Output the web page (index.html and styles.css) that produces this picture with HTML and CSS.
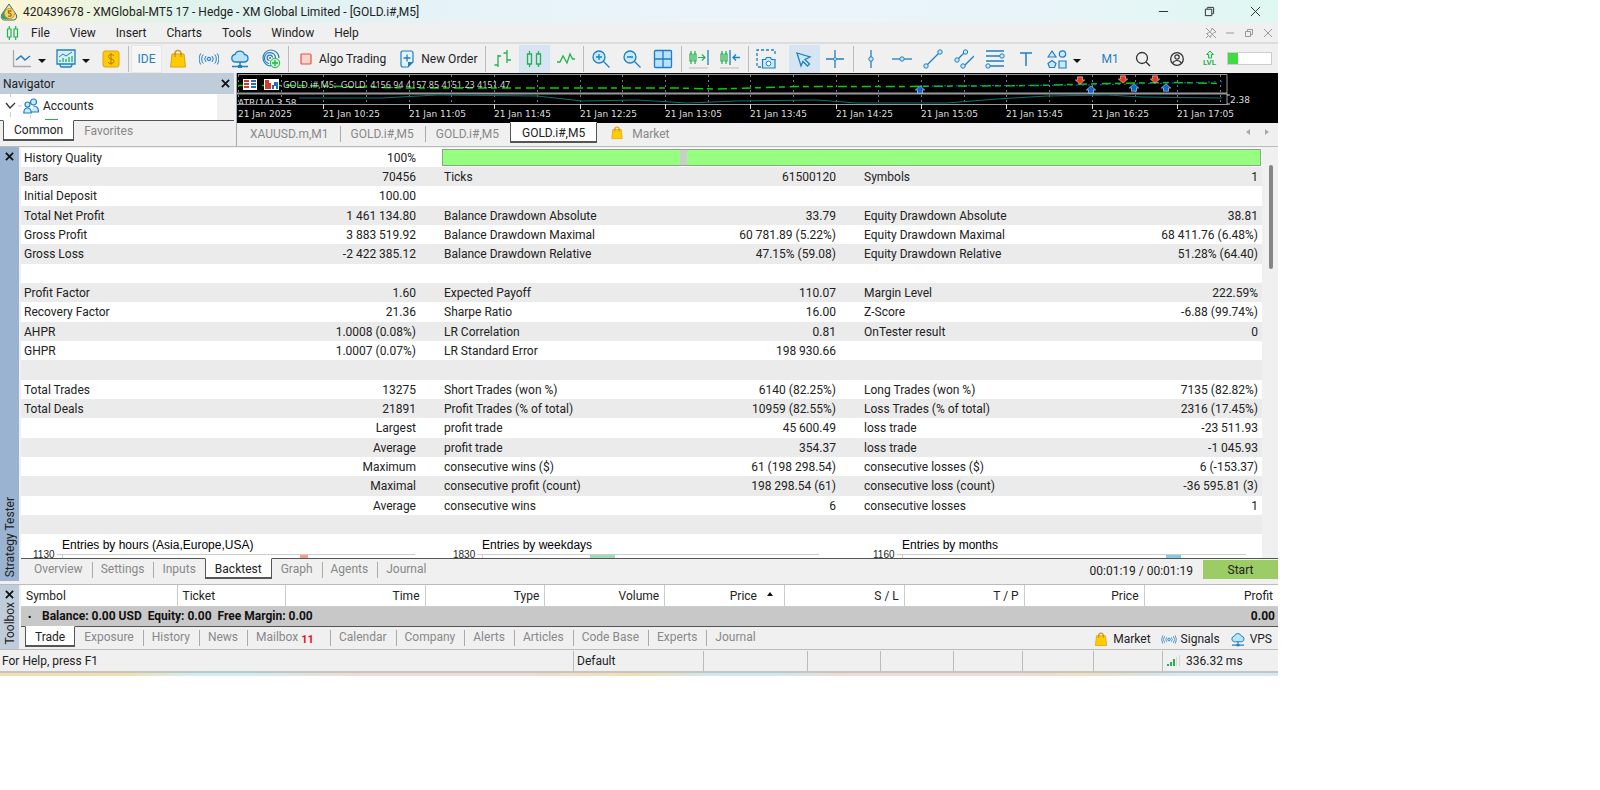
FILE: index.html
```html
<!DOCTYPE html>
<html lang="en">
  <head>
    <meta charset="UTF-8" />
    <meta name="viewport" content="width=device-width, initial-scale=1.0" />
    <title>420439678 - XMGlobal-MT5 17</title>
    <link rel="stylesheet" href="styles.css">
  </head>
  <body>
    <!-- shared icons -->
    <svg class="symbols" aria-hidden="true">
      <symbol id="bag" viewBox="0 0 20 20">
        <path d="M7 6V4.500a3 3 0 0 1 6 0V6" fill="none" stroke="#d69a10" stroke-width="1.500" />
        <path d="M4 5h12l1.500 13h-15z" fill="#fc0" stroke="#dba112" />
        <path d="M7 4v4M13 4v4" stroke="#b57f10" />
      </symbol>
      <symbol id="signal" viewBox="0 0 20 20">
        <circle cx="10" cy="10" r="1.800" fill="#9edcff" stroke="#1f7fc0" />
        <path d="M7 7a4.500 4.500 0 0 0 0 6M13 7a4.500 4.500 0 0 1 0 6M4.300 5.500a7 7 0 0 0 0 9M15.700 5.500a7 7 0 0 1 0 9M1.700 4.500a11 11 0 0 0 0 11M18.300 4.500a11 11 0 0 1 0 11" fill="none" stroke="#1f7fc0" />
      </symbol>
      <symbol id="cloud" viewBox="0 0 20 20">
        <path d="M5 13a3.800 3.800 0 0 1 0-7.500 5 5 0 0 1 9.500 0 3.800 3.800 0 0 1 .5 7.500z" fill="#b9e3fd" stroke="#1f7fc0" stroke-width="1.300" />
        <path d="M10 13V17M2 17.500h16" stroke="#1f7fc0" stroke-width="1.500" />
        <path d="M8 16h4v3H8z" fill="#1f7fc0" />
      </symbol>
      <symbol id="up" viewBox="0 0 10 8">
        <path d="M5 .3l4.700 4.200H7.500v3.200h-5V4.500H.3z" fill="#1266c4" stroke="#cfe4fa" stroke-width=".6" />
      </symbol>
      <symbol id="down" viewBox="0 0 10 8">
        <path d="M5 7.700L.3 3.500h2.200V.3h5v3.200h2.200z" fill="#e8391d" stroke="#f7cfc6" stroke-width=".6" />
      </symbol>
    </svg>

    <div class="window">
      <header class="titlebar">
        <svg class="logo" viewBox="0 0 18 18">
          <path d="M9 1l7.500 11c.8 3-1 5-3 5h-9c-3 0-4-3-2.500-6z" fill="#f3e3a1" stroke="#2e6f8e" />
          <path d="M2 11l5-8c-3 5-2 10 3 13H4c-2 0-3-2-2-5z" fill="#3fa06a" />
          <circle cx="9.500" cy="10.500" r="5" fill="#f7d56a" stroke="#c3922b" />
          <path d="M11.500 8h-3v2.200c3-.5 3.500 2.800 1.500 3H8" fill="none" stroke="#a06b10" stroke-width="1.300" />
        </svg>
        <span class="title">420439678 - XMGlobal-MT5 17 - Hedge - XM Global Limited - [GOLD.i#,M5]</span>
        <button class="winbtn" aria-label="Minimize"><svg viewBox="0 0 12 12"><path d="M1 6h10" /></svg></button>
        <button class="winbtn" aria-label="Restore"><svg viewBox="0 0 12 12"><path d="M1.500 3.500h7v7h-7zM3.500 3V2q0-.5.500-.5h6q.5 0 .5.500v6q0 .5-.5.500H9" /></svg></button>
        <button class="winbtn" aria-label="Close"><svg viewBox="0 0 12 12"><path d="M1 1l10 10M11 1L1 11" /></svg></button>
      </header>

      <nav class="menubar">
        <svg class="menuicon" viewBox="0 0 12 14"><path d="M1 3h3.500v8H1zM7.500 3H11v8H7.500zM2.800 0v3M2.800 11v3M9.200 0v3M9.200 11v3" fill="none" stroke="#22b14c" stroke-width="1.200" /></svg>
        <button>File</button>
        <button>View</button>
        <button>Insert</button>
        <button>Charts</button>
        <button>Tools</button>
        <button>Window</button>
        <button>Help</button>
        <div class="childbtns">
          <button aria-label="Unpin"><svg viewBox="0 0 12 12"><path d="M7 1l4 4-2 .5-3 3-.5 2-4-4 2-.5 3-3zM4 8l-3 3M1 1l10 10" /></svg></button>
          <button aria-label="Minimize chart"><svg viewBox="0 0 12 12"><path d="M2 6h8" /></svg></button>
          <button aria-label="Restore chart"><svg viewBox="0 0 12 12"><path d="M2.500 4.500h5v5h-5zM4.500 4V2.500h5v5H8" /></svg></button>
          <button aria-label="Close chart"><svg viewBox="0 0 12 12"><path d="M2 2l8 8M10 2l-8 8" /></svg></button>
        </div>
      </nav>

      <div class="toolbar">
        <span class="grip"></span>
        <button class="drop" aria-label="Line chart">
          <svg viewBox="0 0 20 20"><path d="M1.500 1v16.500H19" fill="none" stroke="#aaa" stroke-width="1.300" /><path d="M4 11l5-4 4 4 5-4" fill="none" stroke="#1f7fc0" stroke-width="1.500" /></svg>
          <span class="arrow"></span>
        </button>
        <button class="drop" aria-label="Templates">
          <svg viewBox="0 0 20 20"><path d="M1 1h18v14H1zM4 15q0 3 2 3h8q2 0 2-3" fill="#d8effd" stroke="#1f7fc0" stroke-width="1.300" /><path d="M3 8l4-3 3 2 6-4" fill="none" stroke="#1f7fc0" /><path d="M4 13v-2M7 13V9M10 13v-3M13 13V8M16 13V7" stroke="#22b14c" stroke-width="1.300" /></svg>
          <span class="arrow"></span>
        </button>
        <button class="tool" aria-label="Quotes">
          <svg viewBox="0 0 20 20"><rect x="2" y="2" width="16" height="16" rx="2" fill="#fc0" stroke="#dfa01c" /><path d="M13 7q-1-1.500-3-1.500-2.500 0-2.500 2T10 10q3 .3 3 2.300T10 14.500q-2.200 0-3-1.500M10 4v12" fill="none" stroke="#b5780c" /></svg>
        </button>
        <span class="sep"></span>
        <button class="tool ide">IDE</button>
        <button class="tool" aria-label="Market"><svg><use href="#bag" /></svg></button>
        <button class="tool" aria-label="Signals"><svg><use href="#signal" /></svg></button>
        <button class="tool" aria-label="VPS"><svg><use href="#cloud" /></svg></button>
        <button class="tool" aria-label="Copy trading">
          <svg viewBox="0 0 20 20"><path d="M10 17a8 8 0 1 1 8-8M8 14.500A5.500 5.500 0 1 1 14.500 9M8.500 11.500a2.700 2.700 0 1 1 3-3" fill="none" stroke="#1f7fc0" stroke-width="1.200" /><circle cx="9" cy="9" r="1" fill="#1f7fc0" /><circle cx="14" cy="14" r="4.700" fill="#c9f5cf" stroke="#22b14c" /><path d="M14 11v6M11 14h6" stroke="#22b14c" stroke-width="1.300" /></svg>
        </button>
        <span class="sep"></span>
        <button class="wide"><svg class="small" viewBox="0 0 12 12"><rect x="1" y="1" width="10" height="10" rx="1" fill="#ffd3cd" stroke="#e4523f" stroke-width="1.200" /></svg>Algo Trading</button>
        <button class="wide"><svg class="note" viewBox="0 0 14 18"><path d="M2 1h9q2 0 2 2v9l-5 5H3q-2 0-2-2V3q0-2 2-2z" fill="#e4f4fe" stroke="#1f7fc0" stroke-width="1.200" /><path d="M8 17v-5h5z" fill="#1f7fc0" /><path d="M7 4.500v7M3.500 8h7" stroke="#1f7fc0" stroke-width="1.300" /></svg>New Order</button>
        <span class="sep"></span>
        <button class="tool" aria-label="Bars">
          <svg viewBox="0 0 20 20"><path d="M5 6v12M1.500 16H5M5 7h3M14 1v13M10.500 4H14M14 11h4" fill="none" stroke="#22b14c" stroke-width="1.300" /></svg>
        </button>
        <button class="tool on" aria-label="Candles">
          <svg viewBox="0 0 20 20"><path d="M3.500 5h4v10h-4zM12.500 5h4v10h-4zM5.500 2v3M5.500 15v3M14.500 2v3M14.500 15v3" fill="none" stroke="#22b14c" stroke-width="1.300" /></svg>
        </button>
        <button class="tool" aria-label="Line">
          <svg viewBox="0 0 20 20"><path d="M2 13h3l3-6 4 7 3-9 2.500 5H20" fill="none" stroke="#22b14c" stroke-width="1.300" /></svg>
        </button>
        <span class="sep"></span>
        <button class="tool" aria-label="Zoom in">
          <svg viewBox="0 0 20 20"><circle cx="8" cy="8" r="6" fill="#c9e9fd" stroke="#1f7fc0" stroke-width="1.300" /><path d="M12.500 12.500l6 6M5 8h6M8 5v6" stroke="#1f7fc0" stroke-width="1.300" /></svg>
        </button>
        <button class="tool" aria-label="Zoom out">
          <svg viewBox="0 0 20 20"><circle cx="8" cy="8" r="6" fill="#c9e9fd" stroke="#1f7fc0" stroke-width="1.300" /><path d="M12.500 12.500l6 6M5 8h6" stroke="#1f7fc0" stroke-width="1.300" /></svg>
        </button>
        <button class="tool" aria-label="Tile windows">
          <svg viewBox="0 0 20 20"><rect x="1.500" y="1.500" width="17" height="17" rx="1" fill="#b9e3fd" stroke="#1f7fc0" stroke-width="1.300" /><path d="M10 2v16M2 10h16" stroke="#1f7fc0" stroke-width="1.300" /></svg>
        </button>
        <span class="sep"></span>
        <button class="tool" aria-label="Auto scroll">
          <svg viewBox="0 0 20 20"><path d="M1 5h2v7H1zM5 5h2v7H5zM2 2v3M2 12v3M6 2v3M6 12v3M9 8.500h7M13 5.500l3 3-3 3" fill="none" stroke="#22b14c" stroke-width="1.200" /><path d="M19 1v15" stroke="#1f7fc0" stroke-width="1.300" /><path d="M0 19h19" stroke="#bbb" /></svg>
        </button>
        <button class="tool" aria-label="Chart shift">
          <svg viewBox="0 0 20 20"><path d="M1 5h2v7H1zM5 5h2v7H5zM2 2v3M2 12v3M6 2v3M6 12v3" fill="none" stroke="#22b14c" stroke-width="1.200" /><path d="M10 1v15M20 8.500h-7M16 5.500l-3 3 3 3" fill="none" stroke="#1f7fc0" stroke-width="1.300" /><path d="M0 19h19" stroke="#bbb" /></svg>
        </button>
        <span class="sep"></span>
        <button class="tool" aria-label="Screenshot">
          <svg viewBox="0 0 20 20"><path d="M5 18H1V1h18v6" fill="none" stroke="#1f7fc0" stroke-width="1.300" stroke-dasharray="3 2" /><path d="M6.500 10.500h3l1-2h4l1 2h3.500v8.500H6.500z" fill="#c9e9fd" stroke="#1f7fc0" stroke-width="1.200" /><circle cx="12.500" cy="14.500" r="2.300" fill="#fff" stroke="#1f7fc0" /></svg>
        </button>
        <span class="grip"></span>
        <button class="tool on" aria-label="Cursor">
          <svg viewBox="0 0 20 20"><path d="M3 4l13 4-5 2.500 4.500 4.500-2 2-4.500-4.500L7 17z" fill="#c9e9fd" stroke="#1f7fc0" stroke-width="1.300" /></svg>
        </button>
        <button class="tool" aria-label="Crosshair">
          <svg viewBox="0 0 20 20"><path d="M10 1v7M10 12v7M1 10h7M12 10h7" stroke="#1f7fc0" stroke-width="1.300" /><circle cx="10" cy="10" r="1.500" fill="none" stroke="#1f7fc0" /></svg>
        </button>
        <span class="sep"></span>
        <button class="tool" aria-label="Vertical line">
          <svg viewBox="0 0 20 20"><path d="M10 1v18" stroke="#1f7fc0" stroke-width="1.300" /><circle cx="10" cy="10" r="2.200" fill="#c9e9fd" stroke="#1f7fc0" /></svg>
        </button>
        <button class="tool" aria-label="Horizontal line">
          <svg viewBox="0 0 20 20"><path d="M0 10h20" stroke="#1f7fc0" stroke-width="1.300" /><circle cx="10" cy="10" r="2.200" fill="#c9e9fd" stroke="#1f7fc0" /></svg>
        </button>
        <button class="tool" aria-label="Trend line">
          <svg viewBox="0 0 20 20"><path d="M3 17L17 3" stroke="#1f7fc0" stroke-width="1.300" /><circle cx="3" cy="17" r="2.200" fill="#c9e9fd" stroke="#1f7fc0" /><circle cx="17" cy="3" r="2.200" fill="#c9e9fd" stroke="#1f7fc0" /></svg>
        </button>
        <button class="tool" aria-label="Channel">
          <svg viewBox="0 0 20 20"><path d="M2 12L12 2M9 18L20 7" stroke="#1f7fc0" stroke-width="1.300" /><circle cx="3" cy="11" r="2.200" fill="#c9e9fd" stroke="#1f7fc0" /><circle cx="11.500" cy="3" r="2.200" fill="#c9e9fd" stroke="#1f7fc0" /><circle cx="9" cy="17" r="2.200" fill="#c9e9fd" stroke="#1f7fc0" /></svg>
        </button>
        <button class="tool" aria-label="Fibonacci">
          <svg viewBox="0 0 20 20"><path d="M1 2h18M1 7h18M1 12h18M1 17h18" stroke="#1f7fc0" stroke-width="1.300" /><circle cx="17" cy="7" r="2.200" fill="#c9e9fd" stroke="#1f7fc0" /><circle cx="3" cy="17" r="2.200" fill="#c9e9fd" stroke="#1f7fc0" /></svg>
        </button>
        <button class="tool" aria-label="Text">
          <svg viewBox="0 0 20 20"><path d="M4 4h12M10 4v13" stroke="#1f7fc0" stroke-width="1.500" /></svg>
        </button>
        <button class="drop" aria-label="Shapes">
          <svg viewBox="0 0 20 20"><path d="M5 2l4 6H1zM12 12h7v7h-7z" fill="#c9e9fd" stroke="#1f7fc0" stroke-width="1.200" /><circle cx="15.500" cy="5" r="3.200" fill="#c9e9fd" stroke="#1f7fc0" stroke-width="1.200" /><path d="M5 11.500l4 3-1.500 4h-5l-1.500-4z" fill="#c9e9fd" stroke="#1f7fc0" stroke-width="1.200" /></svg>
          <span class="arrow"></span>
        </button>
        <span class="grip"></span>
        <button class="tool ide-text">M1</button>
        <button class="tool" aria-label="Search">
          <svg viewBox="0 0 20 20"><circle cx="9" cy="9" r="5.500" fill="none" stroke="#333" stroke-width="1.300" /><path d="M13 13l4 4" stroke="#333" stroke-width="1.500" /></svg>
        </button>
        <div class="account">
          <button class="tool" aria-label="Account">
            <svg viewBox="0 0 20 20"><circle cx="10" cy="10" r="6.300" fill="none" stroke="#333" stroke-width="1.300" /><circle cx="10" cy="8" r="2.200" fill="none" stroke="#333" stroke-width="1.200" /><path d="M6 14q1-2.500 4-2.500t4 2.500" fill="none" stroke="#333" stroke-width="1.200" /></svg>
          </button>
          <button class="tool lvl"><svg viewBox="0 0 10 9"><path d="M5 1l3.500 3.500h-2V8h-3V4.500h-2z" fill="#c9f5cf" stroke="#22b14c" /></svg>LVL</button>
          <div class="level"><div class="level-fill"></div></div>
        </div>
      </div>

      <div class="workspace">
        <aside class="navigator">
          <div class="nav-head">Navigator
            <button class="close" aria-label="Close navigator"><svg viewBox="0 0 10 10"><path d="M1 1l8 8M9 1L1 9" /></svg></button>
          </div>
          <div class="tree">
            <svg class="twig" viewBox="0 0 23 24"><path d="M10.500 0v3M10.500 18v5M30.500 21v3M18 12h4" stroke="#ccc" /><path d="M6 9l4 5 5-5" fill="none" stroke="#333" stroke-width="1.300" /></svg>
            <svg class="people" viewBox="0 0 16 16"><circle cx="10.500" cy="4" r="3" fill="#c9e9fd" stroke="#1f7fc0" stroke-width="1.200" /><path d="M8 14h7.500q0-6-5-6" fill="#c9e9fd" stroke="#1f7fc0" stroke-width="1.200" /><circle cx="4.500" cy="6.500" r="2.500" fill="#c9e9fd" stroke="#1f7fc0" stroke-width="1.200" /><path d="M.8 15q0-5 3.700-5t3.700 5z" fill="#c9e9fd" stroke="#1f7fc0" stroke-width="1.200" /></svg>
            <span>Accounts</span>
          </div>
          <div class="tabs">
            <button class="tab active">Common</button>
            <button class="tab">Favorites</button>
          </div>
        </aside>

        <section class="charts">
          <svg class="chart">
            <path d="M1 1.500H990V32M0 31.500H990" fill="none" stroke="#999" />
            <path d="M1.500 2V31M44.500 2V31M86.500 2V31M129.500 2V31M172.500 2V31M214.500 2V31M257.500 2V31M300.500 2V31M343.500 2V31M385.500 2V31M428.500 2V31M471.500 2V31M513.500 2V31M556.500 2V31M599.500 2V31M641.500 2V31M684.500 2V31M727.500 2V31M769.500 2V31M812.500 2V31M855.500 2V31M898.500 2V31M940.500 2V31M983.500 2V31" stroke="#777d88" stroke-dasharray="2 3" />
            <path d="M1 12.500H60L170 15H440L480 16 560 13.500 660 13.500 800 12.500 850 11 900 10 940 9.500 985 10.500" fill="none" stroke="#00d200" stroke-width="1.500" stroke-dasharray="9 4 6 5" />
            <path d="M683 13L853 12 941 10 989 8.500" fill="none" stroke="#1b5cff" stroke-dasharray="2 4" />
            <path d="M0 20.500H990" stroke="#999" stroke-width="2" />
            <path d="M62 25H145L200 22 300 23 345 28 400 27 450 30 500 28 580 27 620 30H710L760 26 810 23 870 22 905 24 985 25" fill="none" stroke="#0d6f70" />
            <path d="M86.500 31v5M172.500 31v5M257.500 31v5M343.500 31v5M428.500 31v5M513.500 31v5M599.500 31v5M684.500 31v5M769.500 31v5M855.500 31v5M940.500 31v5M990 31h3M990 22h3" stroke="#ddd" />
            <rect x="6" y="6" width="14" height="11" fill="#fff" />
            <path d="M7 8h5M7 11h5M7 14h5" stroke="#d43b2c" stroke-width="2" /><path d="M14 8h5M14 11h5M14 14h5" stroke="#2a6cb5" stroke-width="2" />
            <rect x="27" y="6" width="15" height="11" fill="#fff" />
            <path d="M28 7h4v3h2v6h-6z" fill="#d43b2c" /><path d="M37 9h4v7h-2v-3h-2v3h-2v-4h2z" fill="#2a6cb5" />
            <text class="chart-title" x="46" y="15">GOLD.i#,M5:  GOLD  4156.94 4157.85 4151.23 4151.47</text>
            <text x="1" y="33">ATR(14) 3.58</text>
            <path d="M0 32h60v4H0z" fill="#000" /><path d="M0 31.500h60" stroke="#999" />
            <g class="times">
              <text x="1" y="44">21 Jan 2025</text>
              <text x="86" y="44">21 Jan 10:25</text>
              <text x="172" y="44">21 Jan 11:05</text>
              <text x="257" y="44">21 Jan 11:45</text>
              <text x="343" y="44">21 Jan 12:25</text>
              <text x="428" y="44">21 Jan 13:05</text>
              <text x="513" y="44">21 Jan 13:45</text>
              <text x="599" y="44">21 Jan 14:25</text>
              <text x="684" y="44">21 Jan 15:05</text>
              <text x="769" y="44">21 Jan 15:45</text>
              <text x="855" y="44">21 Jan 16:25</text>
              <text x="940" y="44">21 Jan 17:05</text>
            </g>
            <text x="993" y="30">2.38</text>
            <use href="#down" x="838" y="3" width="10" height="9" />
            <use href="#down" x="881" y="2" width="10" height="9" />
            <use href="#down" x="913" y="2" width="10" height="9" />
            <use href="#up" x="678" y="12" width="10" height="9" />
            <use href="#up" x="849" y="12" width="10" height="9" />
            <use href="#up" x="892" y="10" width="10" height="9" />
            <use href="#up" x="924" y="10" width="10" height="9" />
          </svg>
          <div class="tabs chart-tabs">
            <button class="tab">XAUUSD.m,M1</button>
            <button class="tab">GOLD.i#,M5</button>
            <button class="tab">GOLD.i#,M5</button>
            <button class="tab active">GOLD.i#,M5</button>
            <button class="tab market"><svg><use href="#bag" /></svg>Market</button>
            <div class="scrollers">
              <button aria-label="Scroll left"><svg viewBox="0 0 4 6"><path d="M4 0v6L0 3z" /></svg></button>
              <button aria-label="Scroll right"><svg viewBox="0 0 4 6"><path d="M0 0v6l4-3z" /></svg></button>
            </div>
          </div>
        </section>
      </div>

      <section class="tester">
        <div class="side">
          <button class="close" aria-label="Close tester"><svg viewBox="0 0 10 10"><path d="M1 1l8 8M9 1L1 9" /></svg></button>
          <span>Strategy Tester</span>
        </div>
        <div class="panel">
          <div class="report">
            <div class="report-body">
              <table class="stats">
                <colgroup><col><col class="val"><col><col class="val"><col><col class="val-last"></colgroup>
                <tr><td>History Quality</td><td>100%</td><td colspan="4" class="quality"><div class="bar"><div class="gap"></div></div></td></tr>
                <tr><td>Bars</td><td>70456</td><td>Ticks</td><td>61500120</td><td>Symbols</td><td>1</td></tr>
                <tr><td>Initial Deposit</td><td>100.00</td><td></td><td></td><td></td><td></td></tr>
                <tr><td>Total Net Profit</td><td>1 461 134.80</td><td>Balance Drawdown Absolute</td><td>33.79</td><td>Equity Drawdown Absolute</td><td>38.81</td></tr>
                <tr><td>Gross Profit</td><td>3 883 519.92</td><td>Balance Drawdown Maximal</td><td>60 781.89 (5.22%)</td><td>Equity Drawdown Maximal</td><td>68 411.76 (6.48%)</td></tr>
                <tr><td>Gross Loss</td><td>-2 422 385.12</td><td>Balance Drawdown Relative</td><td>47.15% (59.08)</td><td>Equity Drawdown Relative</td><td>51.28% (64.40)</td></tr>
                <tr><td></td><td></td><td></td><td></td><td></td><td></td></tr>
                <tr><td>Profit Factor</td><td>1.60</td><td>Expected Payoff</td><td>110.07</td><td>Margin Level</td><td>222.59%</td></tr>
                <tr><td>Recovery Factor</td><td>21.36</td><td>Sharpe Ratio</td><td>16.00</td><td>Z-Score</td><td>-6.88 (99.74%)</td></tr>
                <tr><td>AHPR</td><td>1.0008 (0.08%)</td><td>LR Correlation</td><td>0.81</td><td>OnTester result</td><td>0</td></tr>
                <tr><td>GHPR</td><td>1.0007 (0.07%)</td><td>LR Standard Error</td><td>198 930.66</td><td></td><td></td></tr>
                <tr><td></td><td></td><td></td><td></td><td></td><td></td></tr>
                <tr><td>Total Trades</td><td>13275</td><td>Short Trades (won %)</td><td>6140 (82.25%)</td><td>Long Trades (won %)</td><td>7135 (82.82%)</td></tr>
                <tr><td>Total Deals</td><td>21891</td><td>Profit Trades (% of total)</td><td>10959 (82.55%)</td><td>Loss Trades (% of total)</td><td>2316 (17.45%)</td></tr>
                <tr><td></td><td>Largest</td><td>profit trade</td><td>45 600.49</td><td>loss trade</td><td>-23 511.93</td></tr>
                <tr><td></td><td>Average</td><td>profit trade</td><td>354.37</td><td>loss trade</td><td>-1 045.93</td></tr>
                <tr><td></td><td>Maximum</td><td>consecutive wins ($)</td><td>61 (198 298.54)</td><td>consecutive losses ($)</td><td>6 (-153.37)</td></tr>
                <tr><td></td><td>Maximal</td><td>consecutive profit (count)</td><td>198 298.54 (61)</td><td>consecutive loss (count)</td><td>-36 595.81 (3)</td></tr>
                <tr><td></td><td>Average</td><td>consecutive wins</td><td>6</td><td>consecutive losses</td><td>1</td></tr>
                <tr><td></td><td></td><td></td><td></td><td></td><td></td></tr>
              </table>
              <div class="entries">
                <div class="entry">
                  <h3>Entries by hours (Asia,Europe,USA)</h3>
                  <div class="axis"><span>1130</span><svg viewBox="0 0 358 6"><path d="M0 2.500h358M5.500 2v4" /><path class="hours" d="M243 3h8v3h-8z" /></svg></div>
                </div>
                <div class="entry">
                  <h3>Entries by weekdays</h3>
                  <div class="axis"><span>1830</span><svg viewBox="0 0 358 6"><path d="M0 2.500h342M5.500 2v4" /><path class="days" d="M113 3h25v3h-25z" /></svg></div>
                </div>
                <div class="entry">
                  <h3>Entries by months</h3>
                  <div class="axis"><span>1160</span><svg viewBox="0 0 358 6"><path d="M0 2.500h349M5.500 2v4" /><path class="months" d="M269 3h15v3h-15z" /></svg></div>
                </div>
              </div>
            </div>
            <div class="scrollbar"><div class="thumb"></div></div>
          </div>
          <div class="tabs tester-tabs">
            <button class="tab">Overview</button>
            <button class="tab">Settings</button>
            <button class="tab">Inputs</button>
            <button class="tab active">Backtest</button>
            <button class="tab">Graph</button>
            <button class="tab">Agents</button>
            <button class="tab">Journal</button>
            <span class="elapsed">00:01:19 / 00:01:19</span>
            <button class="start">Start</button>
          </div>
        </div>
      </section>

      <section class="toolbox">
        <div class="side">
          <button class="close" aria-label="Close toolbox"><svg viewBox="0 0 10 10"><path d="M1 1l8 8M9 1L1 9" /></svg></button>
          <span>Toolbox</span>
        </div>
        <div class="panel">
          <table class="trades">
            <colgroup><col class="c-symbol"><col class="c-ticket"><col class="c-time"><col><col><col><col><col><col><col class="c-profit"></colgroup>
            <tr><th>Symbol</th><th>Ticket</th><th>Time</th><th>Type</th><th>Volume</th><th>Price<span class="sorted"></span></th><th>S / L</th><th>T / P</th><th>Price</th><th>Profit</th></tr>
            <tr class="balance"><td colspan="9"><span class="dot">•</span>Balance: 0.00 USD&nbsp; Equity: 0.00&nbsp; Free Margin: 0.00</td><td>0.00</td></tr>
          </table>
          <div class="tabs toolbox-tabs">
            <button class="tab active">Trade</button>
            <button class="tab">Exposure</button>
            <button class="tab">History</button>
            <button class="tab">News</button>
            <button class="tab mail">Mailbox<b>11</b></button>
            <button class="tab">Calendar</button>
            <button class="tab">Company</button>
            <button class="tab">Alerts</button>
            <button class="tab">Articles</button>
            <button class="tab">Code Base</button>
            <button class="tab">Experts</button>
            <button class="tab">Journal</button>
            <div class="services">
              <a href="#"><svg><use href="#bag" /></svg>Market</a>
              <a href="#"><svg><use href="#signal" /></svg>Signals</a>
              <a href="#"><svg><use href="#cloud" /></svg>VPS</a>
            </div>
          </div>
        </div>
      </section>

      <footer class="status">
        <span>For Help, press F1</span>
        <span>Default</span>
        <span></span>
        <span></span>
        <span></span>
        <span></span>
        <span></span>
        <span></span>
        <span><svg viewBox="0 0 14 12"><path d="M1 9h2v2H1zM4 7h2v4H4zM7 4h2v7H7z" fill="#22b14c" /><path d="M10 2h1v9h-1zM13 0h1v11h-1z" fill="#d5d5d5" /></svg>336.32 ms</span>
      </footer>
      <div class="desktop-edge"></div>
    </div>
  </body>
</html>
```
FILE: styles.css
```css
* {
  box-sizing: border-box;
}
body {
  margin: 0;
  background: #fff;
  font-family: Roboto, "Open Sans", sans-serif;
  font-size: 12px;
  line-height: 16px;
  color: #222;
}
button {
  font: inherit;
  color: inherit;
  background: none;
  border: 0;
  padding: 0;
  white-space: nowrap;
}
.symbols {
  display: none;
}
.window {
  width: calc(80vw - 2px);
  background: #f0f0f0;
}

/* title and menu */
.titlebar {
  display: flex;
  align-items: center;
  height: 23px;
  background: linear-gradient(90deg, #fbf5d4, #dff3ec 14%, #e4f2f6 30%, #ebf4fb 55%, #e9f4fa 80%, #dff7f1);
}
.logo {
  width: 18px;
  height: 18px;
  margin-right: 5px;
}
.title {
  flex: 1;
}
.winbtn {
  width: 46px;
}
.winbtn svg {
  width: 11px;
  height: 11px;
  fill: none;
  stroke: #222;
  display: block;
  margin: auto;
}
.menubar {
  display: flex;
  align-items: center;
  gap: 20px;
  height: 21px;
  padding: 0 4px 0 6px;
  border-bottom: 2px solid #dcdcdc;
}
.menuicon {
  width: 13px;
  height: 14px;
  margin-right: -8px;
}
.childbtns {
  display: flex;
  gap: 7px;
  margin-left: auto;
}
.childbtns svg {
  width: 12px;
  height: 12px;
  fill: none;
  stroke: #999;
  display: block;
}

/* toolbar */
.toolbar {
  display: flex;
  align-items: center;
  height: 29px;
}
.toolbar svg {
  width: 20px;
  height: 20px;
  flex: none;
}
.grip {
  flex: none;
  width: 4px;
  height: 28px;
  margin: 0 2px 0 1px;
  background: radial-gradient(circle, #bbb 30%, transparent 40%) 0 0 / 2px 2px;
}
.sep {
  flex: none;
  width: 1px;
  height: 26px;
  margin: 0 2px;
  background: #bbb;
}
.tool {
  flex: none;
  display: flex;
  align-items: center;
  justify-content: center;
  width: 31px;
  height: 28px;
}
.tool.on {
  background: #d7e4f2;
}
.ide {
  background: #f6f6f6;
  color: #1f7fc0;
  border: 1px solid #e6e6e6;
}
.ide-text {
  width: 35px;
  color: #1f7fc0;
}
.drop {
  flex: none;
  display: flex;
  align-items: center;
  gap: 6px;
  width: 44px;
  padding-left: 5px;
}
.arrow {
  margin-top: 4px;
  border: 4px solid transparent;
  border-top-color: #111;
  border-bottom: 0;
}
.wide {
  display: flex;
  align-items: center;
  gap: 7px;
  padding: 0 5px 0 9px;
}
.toolbar .small {
  width: 12px;
  height: 12px;
}
.toolbar .note {
  width: 14px;
  height: 18px;
}
.account {
  display: flex;
  align-items: center;
  gap: 2px;
  margin-left: auto;
  padding-right: 6px;
}
.lvl {
  flex-direction: column;
  font-size: 8px;
  line-height: 8px;
  font-weight: 600;
  color: #22b14c;
}
.toolbar .lvl svg {
  width: 10px;
  height: 9px;
}
.level {
  width: 45px;
  height: 13px;
  border: 1px solid #ccc;
  background: #fff;
}
.level-fill {
  width: 24%;
  height: 100%;
  background: #3fdc3f;
}

/* navigator and chart */
.workspace {
  display: flex;
  gap: 2px;
  height: 74px;
  border-bottom: 1px solid #bbb;
}
.navigator {
  display: flex;
  flex-direction: column;
  width: 234px;
  flex: none;
}
.nav-head {
  display: flex;
  align-items: center;
  justify-content: space-between;
  height: 21px;
  padding: 0 4px 0 3px;
  background: #bfcddb;
}
.close svg {
  width: 9px;
  height: 9px;
  fill: none;
  stroke: #111;
  stroke-width: 2;
  display: block;
}
.tree {
  display: flex;
  align-items: center;
  height: 26px;
  margin-right: 17px;
  padding-bottom: 3px;
  background: linear-gradient(#22b14c, #22b14c) 45px 25px / 13px 1px no-repeat #fff;
}
.twig {
  width: 23px;
  height: 24px;
  overflow: visible;
}
.people {
  width: 16px;
  height: 16px;
  margin-right: 4px;
}
.tabs {
  display: flex;
  align-items: flex-start;
  border-top: 1px solid #555;
  color: #888;
}
.tab {
  position: relative;
  height: 20px;
  padding: 0 9px;
}
.tab + .tab::before {
  content: "";
  position: absolute;
  left: 0;
  top: 3px;
  height: 16px;
  border-left: 1px solid #aaa;
}
.tab.active {
  margin-top: -1px;
  padding-top: 2px;
  height: 21px;
  background: #fff;
  border: 1px solid #555;
  border-top-color: #fff;
  border-bottom-width: 2px;
  color: #222;
}
.tab.active::before,
.tab.active + .tab::before {
  display: none;
}
.navigator .tabs {
  padding-left: 3px;
}
.navigator .tab {
  padding: 0 10px;
}
.charts {
  flex: 1;
  min-width: 0;
  border-left: 1px solid #aaa;
}
.chart {
  display: block;
  width: 100%;
  height: 50px;
  background: #000;
}
.chart text {
  font-family: "DejaVu Sans", sans-serif;
  font-size: 9px;
  fill: #ddd;
  white-space: pre;
}
.chart .chart-title {
  font-family: "Open Sans", sans-serif;
}
.chart-tabs {
  border-top: 0;
}
.chart-tabs .tab {
  padding: 1px 11px 0;
}
.chart-tabs .tab:first-child {
  padding-left: 13px;
}
.market svg {
  width: 14px;
  height: 14px;
  vertical-align: -2px;
  margin: 0 8px 0 2px;
}
.scrollers {
  display: flex;
  gap: 15px;
  margin-left: auto;
  padding: 6px 9px 0 0;
}
.scrollers svg {
  display: block;
  width: 4px;
  height: 6px;
  fill: #aaa;
}

/* strategy tester */
.tester {
  display: flex;
  height: 438px;
  border-bottom: 1px solid #bbb;
}
.side {
  display: flex;
  flex-direction: column;
  align-items: center;
  justify-content: space-between;
  width: 19px;
  flex: none;
  padding: 5px 0 4px;
  margin-bottom: 3px;
  background: #9ab3d1;
}
.side span {
  writing-mode: vertical-rl;
  transform: rotate(180deg);
}
.panel {
  flex: 1;
  min-width: 0;
  padding-left: 2px;
}
.report {
  display: flex;
  height: 411px;
  padding-top: 1px;
  overflow: hidden;
}
.report-body {
  flex: 1;
  min-width: 0;
  background: #fff;
}
.stats {
  width: 100%;
  table-layout: fixed;
  border-collapse: collapse;
}
.stats .val {
  width: 210px;
}
.stats .val-last {
  width: 191px;
}
.stats tr {
  height: 19px;
}
.stats tr:nth-child(3n) {
  height: 20px;
}
.stats tr:nth-child(even) {
  background: #ebebeb;
}
.stats td {
  padding: 0 3px;
  white-space: nowrap;
}
.stats td:nth-child(even) {
  text-align: right;
  padding-right: 25px;
}
.stats td:last-child {
  padding-right: 4px;
}
.stats .quality,
.stats .quality:last-child {
  padding: 1px 1px 1px 1px;
}
.bar {
  display: flex;
  height: 17px;
  border: 1px solid #8aa886;
  background: #96ff80;
}
.gap {
  width: 7px;
  margin-left: 29%;
  background: #ccc;
}
.entries {
  display: flex;
}
.entry {
  width: 420px;
  flex: none;
}
.entry:last-child {
  flex: 1;
}
.entry h3 {
  margin: 4px 0 0 41px;
  font: 12px/14px "Liberation Sans", Arial, sans-serif;
  color: #000;
}
.axis {
  display: flex;
  align-items: flex-start;
  gap: 2px;
  padding-left: 12px;
  font: 10px/10px "Liberation Sans", Arial, sans-serif;
}
.axis svg {
  width: 358px;
  height: 6px;
  fill: none;
  stroke: #ccc;
}
.axis span {
  margin-top: -2px;
}
.axis .hours {
  fill: #f4a08c;
  stroke: none;
}
.axis .days {
  fill: #9ddcbb;
  stroke: none;
}
.axis .months {
  fill: #82cbe2;
  stroke: none;
}
.scrollbar {
  width: 16px;
  padding: 17px 5px 0 7px;
}
.thumb {
  height: 104px;
  border-radius: 2px;
  background: #858585;
}
.tester-tabs .tab:first-child,
.toolbox-tabs .tab:first-child {
  margin-left: 4px;
}
.elapsed {
  margin: 4px 10px 0 auto;
  color: #222;
}
.start {
  width: 75px;
  height: 19px;
  margin-top: 1px;
  background: #9ccc65;
  color: #222;
}

/* toolbox */
.toolbox {
  display: flex;
  height: 65px;
  border-bottom: 1px solid #bbb;
}
.toolbox .side {
  background: #bfcddb;
  margin-bottom: 0;
}
.trades {
  width: 100%;
  table-layout: fixed;
  border-collapse: collapse;
}
.c-symbol {
  width: 156px;
}
.c-ticket {
  width: 108px;
}
.c-time {
  width: 140px;
}
.c-profit {
  width: 134px;
}
.trades th {
  height: 21px;
  padding: 2px 5px 0;
  background: #fff;
  border-right: 1px solid #ccc;
  border-bottom: 1px solid #ccc;
  font-weight: normal;
  text-align: right;
}
.trades th:nth-child(-n+2) {
  text-align: left;
}
.trades th:last-child {
  border-right: 0;
}
.sorted {
  display: inline-block;
  margin: 0 6px 4px 10px;
  border: 3px solid transparent;
  border-bottom: 4px solid #111;
  border-top: 0;
}
.balance td {
  height: 20px;
  padding: 0 3px;
  background: #c8c8c8;
  font-weight: bold;
  color: #111;
}
.balance td:last-child {
  text-align: right;
}
.dot {
  display: inline-block;
  width: 14px;
  margin-left: 4px;
  font-size: 9px;
}
.toolbox-tabs .mail {
  padding-right: 16px;
}
.mail b {
  margin-left: 3px;
  font-size: 11px;
  line-height: 10px;
  vertical-align: -2px;
  color: #e81123;
}
.services {
  display: flex;
  gap: 10px;
  margin-left: auto;
  padding: 4px 6px 0 0;
}
.services a {
  display: flex;
  align-items: center;
  gap: 4px;
  color: #222;
  text-decoration: none;
}
.services svg {
  width: 16px;
  height: 15px;
}

/* status bar */
.status {
  display: grid;
  grid-template-columns: minmax(0, 1fr) 130px 104px 73px 73px 69px 71px 69px 116px;
  height: 23px;
  border-bottom: 2px solid #c4c4c4;
}
.status span {
  display: flex;
  align-items: center;
  gap: 6px;
  margin-top: 1px;
  padding: 0 3px;
  border-left: 1px solid #bbb;
}
.status span:first-child {
  border-left: 0;
  padding-left: 2px;
}
.status svg {
  width: 14px;
  height: 12px;
}
.desktop-edge {
  height: 3px;
  background: linear-gradient(90deg, #f0e0b0 0 10%, #cfeef0 15% 20%, #f0dcd0 28% 42%, #f0e0b0 50%, #cfe8f0 56% 61%, #f0dcd0 66% 80%, #eedfc0 85%, #d4e9f0 92%);
}
```
